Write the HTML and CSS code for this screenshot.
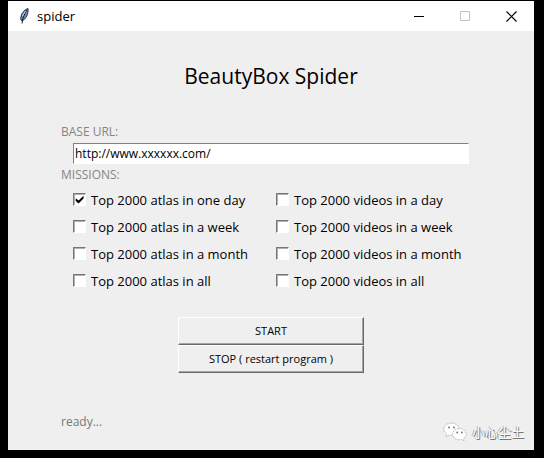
FILE: index.html
```html
<!DOCTYPE html>
<html lang="en">
<head>
<meta charset="utf-8">
<title>spider</title>
<link rel="stylesheet" href="styles.css">
</head>
<body>
<div class="window">
  <header class="titlebar">
    <svg class="feather" viewBox="0 0 16 18" aria-hidden="true">
      <path d="M12 1.500C8 3 4.500 7 4.800 12.500L6 14C10 12 12.500 7 12 1.500Z" fill="#6f8db8" stroke="#1d2b46" stroke-width="1"/>
      <path d="M11 3C9 6 7 9.500 6 16.500" fill="none" stroke="#16181f" stroke-width="1"/>
      <path d="M6.500 9L9.500 4" stroke="#c5d5ea" stroke-width="1"/>
    </svg>
    <span class="caption">spider</span>
    <button class="control" type="button" aria-label="Minimize">
      <svg viewBox="0 0 11 11"><path d="M0 5.500H10" stroke="#000"/></svg>
    </button>
    <button class="control" type="button" aria-label="Maximize" disabled>
      <svg viewBox="0 0 11 11"><path d="M.5 .5H9.500V9.500H.5Z" fill="none" stroke="#c4c4c4"/></svg>
    </button>
    <button class="control" type="button" aria-label="Close">
      <svg viewBox="0 0 11 11"><path d="M.5 .5L10.500 10.500M10.500 .5L.5 10.500" stroke="#000" stroke-width="1.200"/></svg>
    </button>
  </header>
  <main class="content">
    <h1>BeautyBox Spider</h1>
    <form class="form">
      <div class="fields">
        <label class="caption-label" for="url">BASE URL:</label>
        <input class="url" id="url" type="text" value="http://www.xxxxxx.com/">
        <fieldset class="missions">
          <legend class="caption-label">MISSIONS:</legend>
          <div class="options">
            <label><input type="checkbox" checked>Top 2000 atlas in one day</label>
            <label><input type="checkbox">Top 2000 videos in a day</label>
            <label><input type="checkbox">Top 2000 atlas in a week</label>
            <label><input type="checkbox">Top 2000 videos in a week</label>
            <label><input type="checkbox">Top 2000 atlas in a month</label>
            <label><input type="checkbox">Top 2000 videos in a month</label>
            <label><input type="checkbox">Top 2000 atlas in all</label>
            <label><input type="checkbox">Top 2000 videos in all</label>
          </div>
        </fieldset>
      </div>
      <div class="actions">
        <button type="button">START</button>
        <button type="button">STOP ( restart program )</button>
      </div>
    </form>
    <footer class="status">
      <span>ready...</span>
      <div class="watermark">
        <svg viewBox="0 0 24 20" aria-hidden="true">
          <g fill="#fff" stroke="#a8a8a8" stroke-width=".8" stroke-dasharray="2 1">
            <path d="M8.500 1C4 1 .8 3.800 .8 7.200C.8 9.300 2 11 3.700 12.100L3 14.700L6 13.200C11.500 14.500 16.200 11.300 16.200 7.200C16.200 3.800 13 1 8.500 1Z"/>
            <path d="M16.500 6.500C12.500 6.500 9.600 9 9.600 12.200C9.600 16.200 14 18.700 18.500 17.500L21 18.800L20.500 16.600C22.300 15.500 23.300 14 23.300 12.200C23.300 9 20.500 6.500 16.500 6.500Z"/>
          </g>
          <g fill="#777"><circle cx="6" cy="5.500" r="1"/><circle cx="11" cy="5.500" r="1"/><circle cx="14.200" cy="10.500" r=".9"/><circle cx="18.800" cy="10.500" r=".9"/></g>
        </svg>
        <span lang="zh">小心尘土</span>
      </div>
    </footer>
  </main>
</div>
</body>
</html>
```
FILE: styles.css
```css
* {
  box-sizing: border-box;
}

body {
  display: flex;
  min-height: 100vh;
  margin: 0;
  padding: 1px 10px 8px 8px;
  background: #000;
  color: #000;
  font: 13px/20px "Open Sans", "Noto Sans CJK SC", sans-serif;
}

button,
input {
  color: inherit;
  font: inherit;
}

.window {
  display: flex;
  flex: 1;
  flex-direction: column;
  background: #f0eff0;
}

.titlebar {
  display: flex;
  align-items: center;
  height: 30px;
  padding-left: 8px;
  background: #fff;
}

.feather {
  width: 16px;
  height: 18px;
  margin-right: 5px;
}

.caption {
  flex: 1;
}

.control {
  display: flex;
  align-items: center;
  justify-content: center;
  width: 46px;
  height: 30px;
  padding: 0;
  border: 0;
  background: none;
}

.control svg {
  width: 11px;
  height: 11px;
}

.content {
  display: flex;
  flex: 1;
  flex-direction: column;
  padding-top: 30px;
}

h1 {
  margin: 0;
  font-size: 21px;
  font-weight: 400;
  line-height: 30px;
  text-align: center;
}

.fields {
  padding: 30px 65px 0 53px;
}

.caption-label {
  display: block;
  padding: 0;
  color: #858585;
  font-size: 12px;
  line-height: 22px;
}

.url {
  display: block;
  width: calc(100% - 12px);
  height: 21px;
  margin-left: 12px;
  padding: 0 1px;
  border: 1px solid;
  border-color: #808080 #fff #fff #808080;
  background: #fff;
  font-size: 12px;
}

.missions {
  margin: 0;
  padding: 0;
  border: 0;
}

.options {
  display: grid;
  grid-template-columns: 1fr 1fr;
  column-gap: 10px;
  padding-left: 12px;
}

.options label {
  display: flex;
  align-items: center;
  gap: 5px;
  height: 27px;
  white-space: nowrap;
}

.options input {
  flex: none;
  width: 13px;
  height: 13px;
  margin: 0;
  border: 1px solid;
  border-color: #777 #fff #fff #777;
  background: #fff;
  box-shadow: inset 1px 1px #b0b0b0;
  appearance: none;
}

.options input:checked {
  display: grid;
  place-items: center;
}

.options input:checked::before {
  width: 9px;
  height: 9px;
  background: #000;
  clip-path: polygon(8% 35%, 40% 62%, 95% 8%, 95% 38%, 40% 95%, 8% 66%);
  content: "";
}

.actions {
  display: flex;
  flex-direction: column;
  width: 186px;
  margin: 23px auto 0;
}

.actions button {
  height: 28px;
  padding: 0;
  border: 1px solid;
  border-color: #fff #696969 #696969 #fff;
  background: #f0eff0;
  box-shadow: inset -1px -1px #a5a5a5;
  font-size: 11px;
}

.status {
  display: flex;
  align-items: flex-start;
  justify-content: space-between;
  margin-top: auto;
  padding: 0 10px 8px 53px;
  color: #777;
  font-size: 12px;
}

.watermark {
  display: flex;
  align-items: center;
  gap: 5px;
  padding-top: 10px;
  color: #fafafa;
  font-size: 13px;
  text-shadow: 1px 1px #777, -1px 0 #aaa;
}

.watermark svg {
  width: 24px;
  height: 20px;
}
```
